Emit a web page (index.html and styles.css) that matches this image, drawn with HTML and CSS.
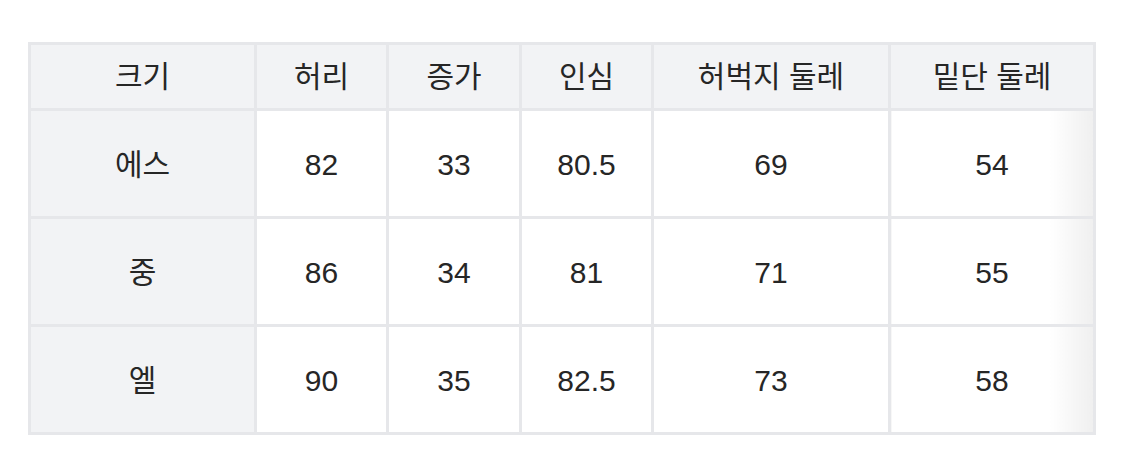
FILE: index.html
```html
<!DOCTYPE html>
<html lang="ko">
<head>
<meta charset="utf-8">
<link rel="stylesheet" href="styles.css">
</head>
<body>
<div class="wrap">
<table class="size-table">
  <thead>
    <tr>
      <th class="c1">크기</th>
      <th class="c2">허리</th>
      <th class="c3">증가</th>
      <th class="c4">인심</th>
      <th class="c5">허벅지 둘레</th>
      <th class="c6">밑단 둘레</th>
    </tr>
  </thead>
  <tbody>
    <tr><th class="rowhead">에스</th><td>82</td><td>33</td><td>80.5</td><td>69</td><td class="last">54</td></tr>
    <tr><th class="rowhead">중</th><td>86</td><td>34</td><td>81</td><td>71</td><td class="last">55</td></tr>
    <tr><th class="rowhead">엘</th><td>90</td><td>35</td><td>82.5</td><td>73</td><td class="last">58</td></tr>
  </tbody>
</table>
</div>
</body>
</html>
```
FILE: styles.css
```css
html, body {
  margin: 0;
  padding: 0;
  background: #ffffff;
}
.wrap {
  padding: 42px 0 0 28px;
}
.size-table {
  border-collapse: collapse;
  font-family: "Liberation Sans", "Noto Sans CJK KR", sans-serif;
  font-size: 30px;
  line-height: 1.2;
  color: #262626;
  table-layout: fixed;
}
.size-table th,
.size-table td {
  border: 3px solid #e6e7ea;
  text-align: center;
  font-weight: 400;
  padding: 0;
}
.size-table thead th {
  background: #f2f3f5;
  height: 63px;
}
.size-table tbody th,
.size-table tbody td {
  height: 102px;
  padding-top: 3px;
}
.size-table .rowhead {
  background: #f2f3f5;
}
.size-table td {
  background: #ffffff;
}
.size-table td.last {
  background: linear-gradient(to right, #ffffff calc(100% - 44px), #efefef);
}
.c1 { width: 223px; }
.c2 { width: 129px; }
.c3 { width: 130px; }
.c4 { width: 129px; }
.c5 { width: 234px; }
.c6 { width: 202px; }
```
